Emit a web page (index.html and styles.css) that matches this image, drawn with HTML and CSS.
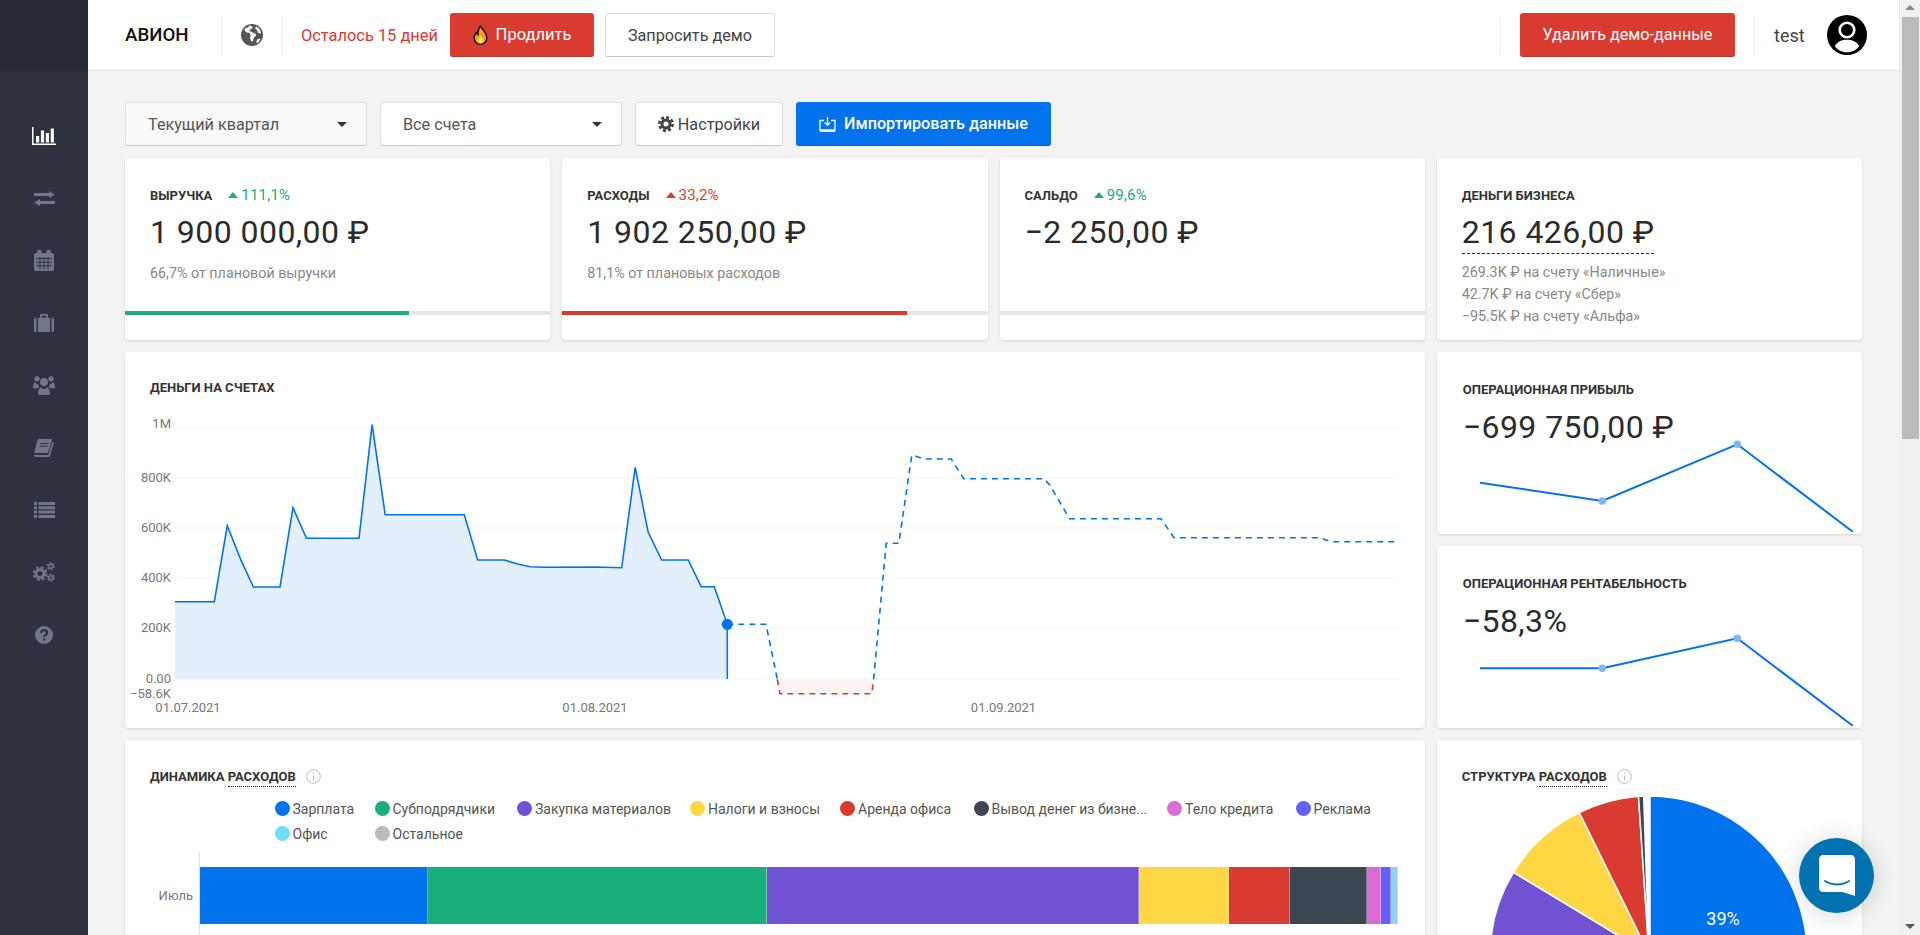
FILE: index.html
```html
<!DOCTYPE html>
<html lang="ru">
<head>
  <meta charset="UTF-8" />
  <title>Авион - Дашборд</title>
  <link rel="stylesheet" href="styles.css">
</head>
<body>

  <aside class="sidebar">
    <div class="sidebar-top"></div>
    <nav class="side-nav">
      <a class="side-link active">
        <svg width="24" height="18" viewBox="0 0 24 18"><path d="M0 0h1.500v16.400H24V18H0z"/><path d="M4 9h3.200v6.400H4zM8.900 3.500h3.200v11.900H8.900zM13.800 6H17v9.400h-3.200zM18.700 1.500h3.200v13.900h-3.200z"/></svg>
      </a>
      <a class="side-link">
        <svg width="21" height="15" viewBox="0 0 21 15"><path d="M0 2h15V0l6 3.500L15 7V5H0zM21 10H6V8l-6 3.500L6 15v-2h15z"/></svg>
      </a>
      <a class="side-link">
        <svg width="20" height="21" viewBox="0 0 20 21"><path d="M4 0h2.600c.5 0 .9.400.9.900V3h5V.9c0-.5.400-.9.900-.9H16c.5 0 .9.400.9.900V3h1.300c1 0 1.800.8 1.800 1.800v14.400c0 1-.8 1.800-1.800 1.800H1.800C.8 21 0 20.200 0 19.200V4.800C0 3.800.8 3 1.800 3h1.300V.9C3.100.4 3.500 0 4 0z"/><path class="cut" d="M2 8.500h16M2 12.200h16M2 15.900h16M6 7v12.500M10 7v12.500M14 7v12.500"/></svg>
      </a>
      <a class="side-link">
        <svg width="20" height="18" viewBox="0 0 20 18"><path d="M0 5.500C0 4.500.8 3.700 1.800 3.700h.7V18h-.7C.8 18 0 17.200 0 16.200zM18.200 3.700c1 0 1.800.8 1.800 1.800v10.700c0 1-.8 1.800-1.800 1.800h-.7V3.700zM4 3.700h2V1.300C6 .6 6.600 0 7.300 0h5.400c.7 0 1.300.6 1.300 1.300v2.400h2V18H4zM7.700 3.700h4.600V1.700H7.700z"/></svg>
      </a>
      <a class="side-link">
        <svg width="22" height="20" viewBox="0 0 22 20"><circle cx="4" cy="3.800" r="2.600"/><circle cx="18" cy="3.800" r="2.600"/><circle cx="11" cy="7" r="4"/><path d="M0 13c0-3.500.8-5.500 2.600-5.500.7 1.200 1.300 1.600 2.300 1.700.3 1 .8 1.700 1.500 2.300-.6.400-1 1-1.300 1.800H1.300C.5 13.300 0 13.300 0 13zM22 13c0-3.500-.8-5.500-2.600-5.500-.7 1.200-1.300 1.600-2.300 1.700-.3 1-.8 1.700-1.500 2.300.6.400 1 1 1.300 1.800h3.800c.8 0 1.300 0 1.300-.3z"/><path d="M6.500 20c-.8 0-1.300-.5-1.300-1.300 0-3.800.8-6.200 2.700-6.200 1 1 2 1.500 3.100 1.500s2.100-.5 3.100-1.500c1.900 0 2.700 2.400 2.700 6.200 0 .8-.5 1.300-1.300 1.300z"/></svg>
      </a>
      <a class="side-link">
        <svg width="20" height="18" viewBox="0 0 20 18"><path d="M4.500 0h12.300c.8 0 1.200.6 1 1.300l-3.300 11.300c-.3 1-1 1.500-2 1.500H1.300C.5 14.100 0 14.600 0 15.100c0 .6.500 1 1.300 1h12.400c.4 0 .7-.2.800-.6l3.900-12.700 1.200.5c.3.100.4.400.3.700l-3.800 12.500c-.3 1-1 1.500-1.900 1.500H2C.7 18 0 17 0 15.700c0-.5 0-1 .2-1.500L3.500.8C3.600.3 4 0 4.500 0z"/><path class="cut" d="M6.500 4.500h8M5.700 7.200h8" /></svg>
      </a>
      <a class="side-link">
        <svg width="21" height="16" viewBox="0 0 21 16"><path d="M0 0h3v3H0zM4.500 0H21v3H4.500zM0 4.300h3v3H0zM4.500 4.300H21v3H4.500zM0 8.600h3v3H0zM4.500 8.600H21v3H4.500zM0 12.900h3v3H0zM4.500 12.900H21v3H4.500z"/></svg>
      </a>
      <a class="side-link">
        <svg width="22" height="20" viewBox="0 0 22 20">
          <g class="gear"><circle class="ring" cx="7" cy="11.500" r="3.900"/><circle class="teeth" cx="7" cy="11.500" r="6.200"/></g>
          <g class="gear small"><circle class="ring" cx="17.800" cy="4.200" r="2"/><circle class="teeth" cx="17.800" cy="4.200" r="3.400"/></g>
          <g class="gear small"><circle class="ring" cx="17.800" cy="15.800" r="2"/><circle class="teeth" cx="17.800" cy="15.800" r="3.400"/></g>
        </svg>
      </a>
      <a class="side-link">
        <svg width="18" height="18" viewBox="0 0 18 18"><circle cx="9" cy="9" r="9"/><path class="cut thick" d="M5.900 6.900C6.100 5 7.400 4.100 9 4.100c1.800 0 3.100 1 3.100 2.600 0 2.300-3 2.300-3 4.400M9.100 12.500v2"/></svg>
      </a>
    </nav>
  </aside>

  <div class="main">
    <header class="topbar">
      <span class="logo">АВИОН</span>
      <span class="divider"></span>
      <span class="globe">
        <svg width="22" height="22" viewBox="0 0 22 22"><circle cx="11" cy="11" r="11" fill="#555"/><path fill="#fff" d="M8.500 1.200 7 3.400 4.600 4 3.300 6.300l2.400 2.200 2.700.3 1.300 2.500-.9 2.600 1.600 3.700 1.700-.8.700-3.200 2.300-2-.7-2.200-3-1-1.600-1.100-1.500.3.400-1.900 2.200-.9.900-1.900zM15 2.500l-.9 2 2 1.500.6 2.500 2.700 1.300.6-1.300C19.500 6 17.700 3.700 15 2.500zM18 14.500l-2 1.300-.7 2.500 1 .9c1.400-1 2.500-2.500 3.100-4.100z"/></svg>
      </span>
      <span class="divider"></span>
      <span class="days-left">Осталось 15 дней</span>
      <a class="btn btn-red btn-extend">
        <svg width="15" height="20" viewBox="0 0 15 20"><path fill="#ff9a1f" stroke="#111" stroke-width="1.400" d="M7.500 1C8.300 4 13.800 6.800 13.800 12.800c0 3.800-2.800 6.500-6.300 6.500S1.200 16.600 1.200 12.800c0-2.700 1.500-4.500 2.500-5.500.2 1.200.7 2 1.300 2.300C4.800 6.500 5.600 3 7.500 1z"/><path fill="#ffe14d" d="M7.500 10.500c.6 1.600 3 2.700 3 5 0 1.800-1.400 3-3 3s-3-1.200-3-3c0-2 2.300-3.200 3-5z"/></svg>
        Продлить
      </a>
      <a class="btn btn-white btn-demo">Запросить демо</a>

      <span class="divider push"></span>
      <a class="btn btn-red btn-delete">Удалить демо-данные</a>
      <span class="divider near"></span>
      <span class="user-name">test</span>
      <svg class="avatar" width="40" height="40" viewBox="0 0 40 40"><circle cx="20" cy="20" r="20" fill="#000"/><circle cx="20" cy="15" r="7.300" fill="none" stroke="#fff" stroke-width="2.600"/><path fill="#fff" d="M7.800 31c2.500-4.500 7-6.300 12.200-6.300s9.700 1.800 12.200 6.300C29.500 35 25 37.300 20 37.300S10.500 35 7.800 31z"/></svg>
    </header>

    <div class="content">
      <div class="toolbar">
        <div class="select select-light"><span>Текущий квартал</span><i class="caret"></i></div>
        <div class="select"><span>Все счета</span><i class="caret"></i></div>
        <a class="btn btn-white btn-settings">
          <svg width="16" height="16" viewBox="0 0 16 16"><circle cx="8" cy="8" r="4" fill="none" stroke="#444" stroke-width="3"/><circle cx="8" cy="8" r="6.600" fill="none" stroke="#444" stroke-width="2.800" stroke-dasharray="3 2.180"/></svg>
          Настройки
        </a>
        <a class="btn btn-blue btn-import">
          <svg width="17" height="16" viewBox="0 0 17 16" fill="none" stroke="#fff" stroke-width="1.300"><path d="M5 4.500H1v9.500h15V4.500h-4M8.500 1v8M5.800 6.500l2.700 2.800 2.700-2.800M1 15.500h15"/></svg>
          Импортировать данные
        </a>
      </div>

      <div class="grid">
        <section class="card stat">
          <div class="stat-title"><span>Выручка</span><span class="delta green"><i class="up"></i>111,1%</span></div>
          <div class="stat-value">1 900 000,00 ₽</div>
          <div class="stat-sub">66,7% от плановой выручки</div>
          <div class="progress"><div class="progress-fill fill-green" style="width: 66.7%"></div></div>
        </section>

        <section class="card stat">
          <div class="stat-title"><span>Расходы</span><span class="delta red"><i class="up"></i>33,2%</span></div>
          <div class="stat-value">1 902 250,00 ₽</div>
          <div class="stat-sub">81,1% от плановых расходов</div>
          <div class="progress"><div class="progress-fill fill-red" style="width: 81.1%"></div></div>
        </section>

        <section class="card stat">
          <div class="stat-title"><span>Сальдо</span><span class="delta green"><i class="up"></i>99,6%</span></div>
          <div class="stat-value">−2 250,00 ₽</div>
          <div class="progress"></div>
        </section>

        <section class="card stat">
          <div class="stat-title"><span>Деньги бизнеса</span></div>
          <div class="stat-value"><span class="dashed">216 426,00 ₽</span></div>
          <ul class="accounts">
            <li>269.3K ₽ на счету «Наличные»</li>
            <li>42.7K ₽ на счету «Сбер»</li>
            <li>−95.5K ₽ на счету «Альфа»</li>
          </ul>
        </section>

        <section class="card wide">
          <div class="card-head"><h3 class="card-title">Деньги на счетах</h3></div>
          <svg class="balance-chart" width="1299" height="328" viewBox="125 400 1299 328">
            <g class="grid-lines">
              <path d="M175 427.500H1399M175 478H1399M175 528H1399M175 578H1399M175 628H1399M175 679H1399"/>
            </g>
            <path class="area" d="M175 601.700H214.300L227.300 525.700 241.200 560.700 253.400 587H280L293 507.700 306.400 538.300H359L372.100 424.700 385.200 514.700H464.300L477.700 560H504.300L517.700 564 530.400 566.700 543 567.300 595.600 567 621.700 567.700 635.200 467.300 648.200 532.300 661.700 560H688.200L701.200 586.700H714.300L727.300 624.300V679H175z"/>
            <path class="area-neg" d="M777.300 679.300 780 693.700H871.900L873.600 679.300z"/>
            <polyline class="line" points="175,601.700 214.300,601.700 227.300,525.700 241.200,560.700 253.400,587 280,587 293,507.700 306.400,538.300 359,538.300 372.100,424.700 385.200,514.700 464.300,514.700 477.700,560 504.300,560 517.700,564 530.400,566.700 543,567.300 595.600,567 621.700,567.700 635.200,467.300 648.200,532.300 661.700,560 688.200,560 701.200,586.700 714.300,586.700 727.300,624.300 727.300,679"/>
            <polyline class="line dash" points="727.300,624.300 766,624.300 777.300,679.300"/>
            <polyline class="line dash neg" points="777.300,679.300 780,693.700 871.900,693.700 873.600,679.300"/>
            <polyline class="line dash" points="873.600,679.300 886.200,543.300 898.800,543.300 911.800,455 924,459 951.200,459 963.800,478.700 1044,478.700 1049.700,485 1069.600,518.700 1161,518.700 1174,537.700 1319.400,537.700 1331,541.700 1398.800,541.700"/>
            <circle class="today" cx="727.300" cy="624.300" r="5.500"/>
            <g class="axis-y">
              <text x="171" y="428">1M</text>
              <text x="171" y="482">800K</text>
              <text x="171" y="532">600K</text>
              <text x="171" y="582">400K</text>
              <text x="171" y="632">200K</text>
              <text x="171" y="683">0.00</text>
              <text x="171" y="698">−58.6K</text>
            </g>
            <g class="axis-x">
              <text x="188" y="712">01.07.2021</text>
              <text x="595" y="712">01.08.2021</text>
              <text x="1003.500" y="712">01.09.2021</text>
            </g>
          </svg>
        </section>

        <div class="side-stack">
          <section class="card">
            <div class="op-head">
              <h3 class="card-title">Операционная прибыль</h3>
              <div class="stat-value">−699 750,00 ₽</div>
            </div>
            <svg class="spark" width="425" height="94" viewBox="1437 440 425 94">
              <polyline points="1480,482.700 1602.300,501 1737.300,444.300 1852.700,531.700"/>
              <circle cx="1602.300" cy="501" r="3.800"/>
              <circle cx="1737.300" cy="444.300" r="3.800"/>
            </svg>
          </section>
          <section class="card">
            <div class="op-head">
              <h3 class="card-title">Операционная рентабельность</h3>
              <div class="stat-value">−58,3%</div>
            </div>
            <svg class="spark" width="425" height="94" viewBox="1437 634 425 94">
              <polyline points="1480,668.300 1602.300,668.300 1737.300,638.300 1852.700,725.700"/>
              <circle cx="1602.300" cy="668.300" r="3.800"/>
              <circle cx="1737.300" cy="638.300" r="3.800"/>
            </svg>
          </section>
        </div>

        <section class="card wide tall">
          <div class="card-head">
            <h3 class="card-title">Динамика <span class="dotted">расходов</span>
              <svg class="info" width="15" height="15" viewBox="0 0 15 15"><circle cx="7.500" cy="7.500" r="6.800"/><path d="M7.500 6.500v5M7.500 3.500v1.500"/></svg>
            </h3>
          </div>
          <div class="legend">
            <span class="legend-item"><i style="background: #0073ed"></i>Зарплата</span>
            <span class="legend-item"><i style="background: #1aaf7a"></i>Субподрядчики</span>
            <span class="legend-item"><i style="background: #7152d2"></i>Закупка материалов</span>
            <span class="legend-item"><i style="background: #ffd744"></i>Налоги и взносы</span>
            <span class="legend-item"><i style="background: #d93b30"></i>Аренда офиса</span>
            <span class="legend-item"><i style="background: #3c4753"></i>Вывод денег из бизне...</span>
            <span class="legend-item"><i style="background: #dd6bd6"></i>Тело кредита</span>
            <span class="legend-item"><i style="background: #6460ff"></i>Реклама</span>
            <span class="legend-item"><i style="background: #6fe0f7"></i>Офис</span>
            <span class="legend-item"><i style="background: #bbb"></i>Остальное</span>
          </div>
          <div class="bar-row">
            <span class="bar-label">Июль</span>
            <div class="bar-plot">
              <div class="bar">
                <span style="width: 227.600px; background: #0073ed"></span>
                <span style="width: 339.900px; background: #1aaf7a"></span>
                <span style="width: 371.300px; background: #7152d2"></span>
                <span style="width: 89.800px; background: #ffd744"></span>
                <span style="width: 61.800px; background: #d93b30"></span>
                <span style="width: 76.600px; background: #3c4753"></span>
                <span style="width: 14.500px; background: #dd6bd6"></span>
                <span style="width: 9.500px; background: #6460ff"></span>
                <span style="width: 7.400px; background: #8fd3ee"></span>
              </div>
            </div>
          </div>
        </section>

        <section class="card tall">
          <div class="card-head pie-head">
            <h3 class="card-title">Структура <span class="dotted">расходов</span>
              <svg class="info" width="15" height="15" viewBox="0 0 15 15"><circle cx="7.500" cy="7.500" r="6.800"/><path d="M7.500 6.500v5M7.500 3.500v1.500"/></svg>
            </h3>
          </div>
          <svg class="pie" width="425" height="330" viewBox="1437 790 425 330">
            <path fill="#0073ed" d="M1650 954V796A158 158 0 0 1 1749.700 1075.700z"/>
            <path fill="#7152d2" d="M1649 954 1491 970A158 158 0 0 1 1513.500 872.300z"/>
            <path fill="#ffd744" d="M1649 954 1513.500 872.300A158 158 0 0 1 1579.300 812.700z"/>
            <path fill="#d93b30" d="M1649 954 1579.300 812.700A158 158 0 0 1 1638.500 796.300z"/>
            <path fill="#3c4753" d="M1649 954 1638.500 796.300A158 158 0 0 1 1643.700 796z"/>
            <text x="1723" y="925">39%</text>
          </svg>
        </section>
      </div>
    </div>
  </div>

  <div class="scrollbar">
    <i class="arrow arrow-up"></i>
    <div class="thumb"></div>
    <i class="arrow arrow-down"></i>
  </div>

  <a class="chat">
    <svg width="36" height="41" viewBox="0 0 36 41"><path fill="#fff" d="M4 0h28c2.200 0 4 1.800 4 4v37l-12.500-4H4c-2.200 0-4-1.800-4-4V4C0 1.800 1.800 0 4 0z"/><path fill="none" stroke="#0171b2" stroke-width="2" stroke-linecap="round" d="M6 26c7 4.500 17 4.500 24 0"/></svg>
  </a>

</body>
</html>
```

FILE: styles.css
```css
:root {
  --blue: #0073ed;
  --green: #1aaf7a;
  --red: #d93b30;
  --text: #333;
  --muted: #888;
  --side-bg: #2d323e;
  --side-icon: #6f7789;
}

html, body {
  height: 100%;
  overflow: hidden;
}

body {
  margin: 0;
  display: flex;
  font-family: Roboto, "Noto Sans", sans-serif;
  font-size: 15px;
  color: var(--text);
  background: #f3f3f3;
}

/* sidebar */
.sidebar {
  width: 88px;
  flex: none;
  background: var(--side-bg);
}

.sidebar-top {
  height: 71px;
  background: #262b35;
}

.side-nav {
  padding-top: 34px;
}

.side-link {
  height: 62.300px;
  display: flex;
  align-items: center;
  justify-content: center;
}

.side-link svg {
  fill: var(--side-icon);
}

.side-link.active svg {
  fill: #fff;
}

.side-link .cut {
  fill: none;
  stroke: var(--side-bg);
  stroke-width: 1;
}

.side-link .cut.thick {
  stroke-width: 2.200;
}

.gear .ring {
  fill: none;
  stroke: var(--side-icon);
  stroke-width: 2.800;
}

.gear .teeth {
  fill: none;
  stroke: var(--side-icon);
  stroke-width: 2.400;
  stroke-dasharray: 2.800 2.070;
}

.gear.small .ring {
  stroke-width: 1.500;
}

.gear.small .teeth {
  stroke-width: 1.500;
  stroke-dasharray: 1.800 1.760;
}

/* main column */
.main {
  flex: 1;
  min-width: 0;
}

.topbar {
  height: 71px;
  box-sizing: border-box;
  display: flex;
  align-items: center;
  padding: 0 32px 0 37px;
  background: #fff;
  border-bottom: 1px solid #e4e4e4;
}

.logo {
  font-size: 18.700px;
  font-weight: 500;
  color: #111;
  width: 59px;
  white-space: nowrap;
}

.divider {
  width: 1px;
  height: 37px;
  background: #eee;
  margin-left: 37px;
}

.divider.push {
  margin-left: auto;
}

.divider.near {
  margin-left: 19px;
}

.globe {
  display: flex;
  margin-left: 19px;
}

.globe + .divider {
  margin-left: 19px;
}

.days-left {
  margin-left: 18px;
  color: var(--red);
  width: 149px;
  font-size: 16.400px;
  white-space: nowrap;
}

.btn {
  height: 44px;
  box-sizing: border-box;
  display: flex;
  align-items: center;
  justify-content: center;
  border-radius: 3px;
  font-size: 16.200px;
  white-space: nowrap;
}

.btn-red {
  background: var(--red);
  color: #fff;
  border-bottom: 1px solid #c0342a;
}

.btn-white {
  background: #fff;
  color: #444;
  border: 1px solid #ddd;
  border-bottom-color: #c9c9c9;
}

.btn-blue {
  background: var(--blue);
  color: #fff;
  border-bottom: 1px solid #0062cc;
  font-weight: 500;
}

.btn-extend {
  width: 144px;
  gap: 8px;
  font-size: 16.500px;
}

.btn-demo {
  width: 170px;
  margin-left: 11px;
}

.btn-delete {
  width: 215px;
  margin-left: 19px;
}

.user-name {
  margin-left: 19px;
  width: 53px;
  font-size: 18px;
  color: #444;
}

.avatar {
  flex: none;
}

.content {
  padding: 31px 37px 0;
}

.toolbar {
  display: flex;
  gap: 13px;
  height: 44px;
  margin-bottom: 12px;
}

.select {
  width: 242px;
  box-sizing: border-box;
  display: flex;
  align-items: center;
  justify-content: space-between;
  padding: 0 19px 0 22px;
  background: #fff;
  border: 1px solid #ddd;
  border-bottom-color: #c9c9c9;
  border-radius: 3px;
  color: #555;
  font-size: 16.200px;
}

.select-light {
  background: #fafafa;
}

.caret {
  border-left: 5px solid transparent;
  border-right: 5px solid transparent;
  border-top: 5px solid #333;
}

.btn-settings {
  width: 148px;
  gap: 4px;
}

.btn-import {
  width: 255px;
  gap: 8px;
}

/* cards */
.grid {
  display: grid;
  grid-template-columns: repeat(4, 1fr);
  grid-template-rows: 182px 376px 400px;
  gap: 12px;
}

.card {
  background: #fff;
  border-radius: 4px;
  box-shadow: 0 1px 3px rgba(0, 0, 0, 0.13);
  overflow: hidden;
}

.wide {
  grid-column: span 3;
}

.stat {
  display: flex;
  flex-direction: column;
  padding-top: 30px;
}

.stat-title,
.stat .stat-value,
.stat-sub,
.accounts {
  padding-left: 25px;
}

.stat-title {
  display: flex;
  align-items: center;
  gap: 16px;
  height: 14px;
  font-size: 13px;
  font-weight: 700;
  text-transform: uppercase;
}

.delta {
  display: flex;
  align-items: center;
  gap: 3px;
  font-size: 15px;
  letter-spacing: 0.2px;
  font-weight: 400;
}

.delta.green {
  color: var(--green);
}

.delta.red {
  color: var(--red);
}

.up {
  border-left: 5px solid transparent;
  border-right: 5px solid transparent;
  border-bottom: 6px solid currentColor;
}

.stat-value {
  height: 40px;
  margin-top: 10px;
  font-size: 32px;
  letter-spacing: 0.450px;
  line-height: 40px;
  color: #2b2b2b;
  white-space: nowrap;
}

.dashed {
  display: inline-block;
  height: 41px;
  border-bottom: 1px dashed #222;
}

.stat-sub {
  margin-top: 12px;
  line-height: 18px;
  font-size: 14.300px;
  color: var(--muted);
}

.progress {
  height: 4px;
  margin-top: auto;
  margin-bottom: 25px;
  background: #e6e6e6;
}

.progress-fill {
  height: 100%;
}

.fill-green {
  background: var(--green);
}

.fill-red {
  background: var(--red);
}

.accounts {
  list-style: none;
  margin: 9px 0 0;
  font-size: 14.300px;
  line-height: 22px;
  color: var(--muted);
}

.card-head {
  height: 48px;
  box-sizing: border-box;
  padding: 29px 25px 0;
}

.card-title {
  margin: 0;
  height: 14px;
  line-height: 14px;
  font-size: 13px;
  font-weight: 700;
  text-transform: uppercase;
  white-space: nowrap;
}

.dotted {
  border-bottom: 1px dotted #222;
  padding-bottom: 2px;
}

.info {
  vertical-align: -3px;
  margin-left: 7px;
  fill: none;
  stroke: #bbb;
}

.balance-chart,
.spark,
.pie {
  display: block;
}

.grid-lines path {
  fill: none;
  stroke: #f5f5f5;
}

.area {
  fill: #e3f0fc;
}

.area-neg {
  fill: #fdf3f2;
}

.line {
  fill: none;
  stroke: var(--blue);
  stroke-width: 1.600;
}

.line.dash {
  stroke-dasharray: 6 5;
}

.line.neg {
  stroke: var(--red);
}

.today {
  fill: var(--blue);
}

.balance-chart text {
  font-size: 13px;
  fill: #777;
}

.axis-y text {
  text-anchor: end;
}

.axis-x text {
  text-anchor: middle;
}

.side-stack {
  display: flex;
  flex-direction: column;
  gap: 12px;
}

.side-stack .card {
  flex: 1;
}

.op-head {
  height: 88px;
  box-sizing: border-box;
  padding: 31px 26px 0;
}

.spark polyline {
  fill: none;
  stroke: var(--blue);
  stroke-width: 2;
}

.spark circle {
  fill: #7fb5f5;
}

.tall {
  min-height: 400px;
}

.legend {
  display: grid;
  grid-template-columns: 100px 142.500px 173px 150px 133.500px 193.500px 128.500px auto;
  grid-auto-rows: 25px;
  margin: 8px 0 0 149.500px;
  font-size: 14px;
  color: #555;
}

.legend-item {
  display: flex;
  align-items: center;
  gap: 3px;
  white-space: nowrap;
}

.legend-item i {
  width: 15px;
  height: 15px;
  border-radius: 50%;
  flex: none;
}

.bar-row {
  display: flex;
  margin-top: 6px;
}

.bar-label {
  width: 68px;
  height: 87px;
  line-height: 87px;
  margin-right: 6px;
  text-align: right;
  font-size: 13px;
  color: #777;
}

.bar-plot {
  border-left: 1px solid #e2e2e2;
  padding: 15px 0;
}

.bar {
  display: flex;
  height: 57px;
}

.bar span {
  flex: none;
  box-shadow: inset -1px 0 0 rgba(255, 255, 255, 0.35);
}

.pie-head {
  height: 50px;
}

.pie path {
  stroke: #fff;
  stroke-width: 1.500;
}

.pie text {
  font-size: 18px;
  fill: #fff;
  text-anchor: middle;
}

/* scrollbar */
.scrollbar {
  width: 21px;
  flex: none;
  display: flex;
  flex-direction: column;
  align-items: center;
  background: #f1f1f1;
  border-left: 1px solid #ebebeb;
  box-sizing: border-box;
}

.thumb {
  width: 17px;
  height: 422px;
  margin-top: 7px;
  background: #bbb;
}

.arrow {
  width: 0;
  height: 0;
  border-left: 5px solid transparent;
  border-right: 5px solid transparent;
}

.arrow-up {
  margin-top: 5px;
  border-bottom: 5px solid #888;
}

.arrow-down {
  margin-top: auto;
  margin-bottom: 6px;
  border-top: 5px solid #555;
}

/* chat launcher */
.chat {
  position: fixed;
  left: 1799px;
  top: 838px;
  width: 75px;
  height: 75px;
  display: flex;
  align-items: center;
  justify-content: center;
  border-radius: 50%;
  background: #0171b2;
  box-shadow: 0 2px 24px rgba(0, 0, 0, 0.16);
}
```
